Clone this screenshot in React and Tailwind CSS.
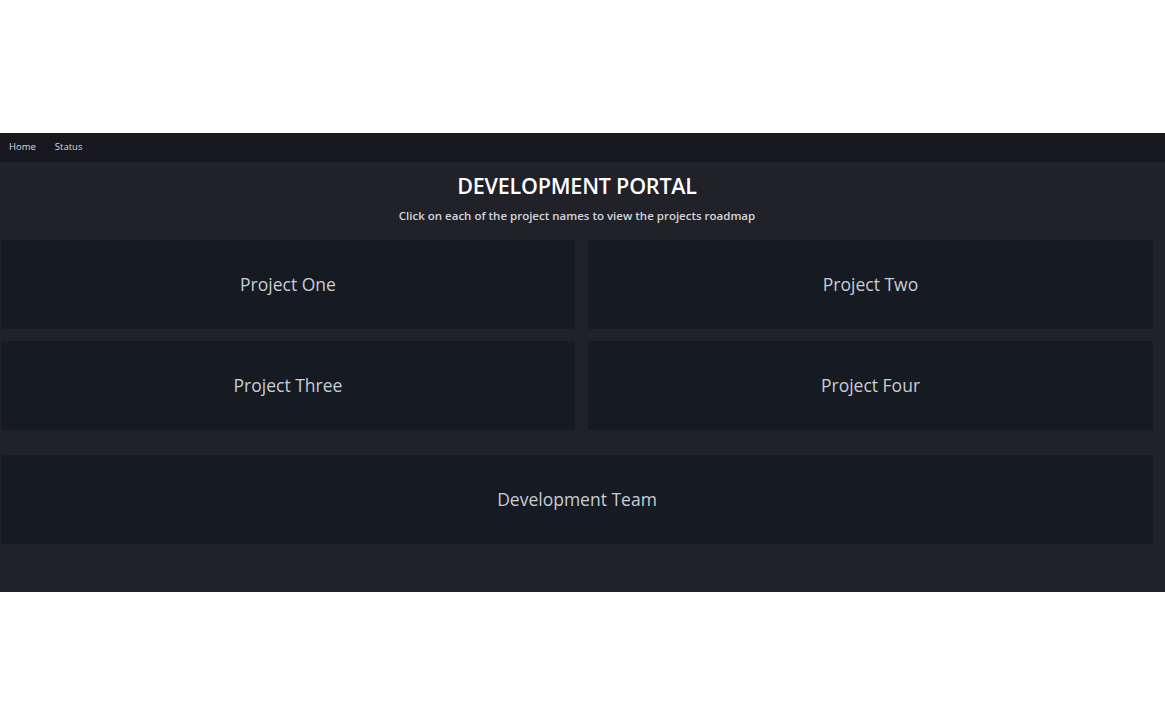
import React from "react";

const projects = ["Project One", "Project Two", "Project Three", "Project Four"];

const Card = ({ title }) => {
  return (
    <div className="h-[89px] bg-[#161a22] flex items-center justify-center text-[17.5px] text-[#c8cdd4] cursor-pointer">
      {title}
    </div>
  );
};

const App = () => {
  return (
    <div
      className="min-h-screen bg-white flex flex-col justify-center"
      style={{ fontFamily: "'Open Sans', 'Noto Sans', sans-serif" }}
    >
      {/* navbar */}
      <div className="h-[29px] bg-[#17171f] flex items-center gap-[19px] px-[9px] text-[9.5px] text-[#d6d9de]">
        <span>Home</span>
        <span>Status</span>
      </div>

      <div className="h-[430px] bg-[#21212a] pl-px pr-[12px]">
        <div className="pt-[10px] text-center">
          <h1 className="text-[21.5px] font-semibold text-white leading-[28px] tracking-[-0.2px]">
            DEVELOPMENT PORTAL
          </h1>
          <p className="mt-[8px] text-[11.5px] font-semibold text-[#d4d6db] leading-[16px]">
            Click on each of the project names to view the projects roadmap
          </p>
        </div>

        <div className="mt-[16px] grid grid-cols-[574px_1fr] gap-x-[13px] gap-y-[12px]">
          {projects.map((p) => (
            <Card key={p} title={p} />
          ))}
        </div>

        <div className="mt-[25px]">
          <Card title="Development Team" />
        </div>
      </div>
    </div>
  );
};

export default App;
